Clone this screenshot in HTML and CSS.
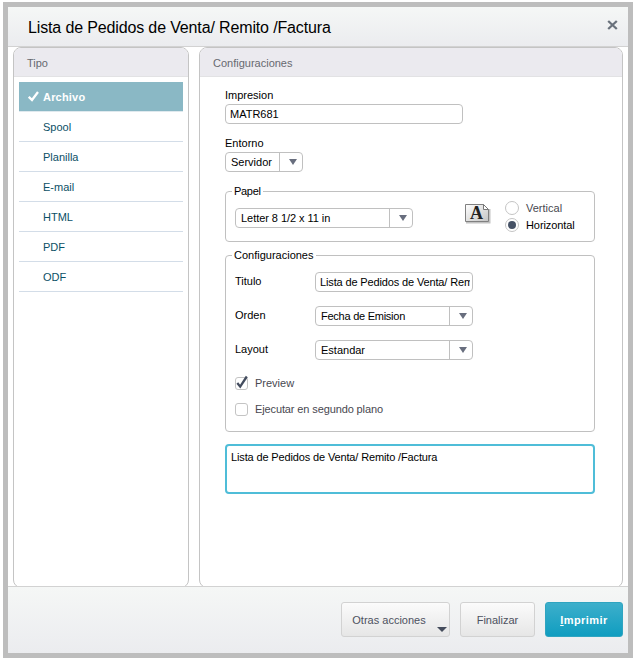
FILE: index.html
```html
<!DOCTYPE html>
<html lang="es">
<head>
    <meta charset="UTF-8">
    <meta name="viewport" content="width=device-width, initial-scale=1.0">
    <title>Lista de Pedidos de Venta/ Remito /Factura</title>
    <link rel="stylesheet" href="styles.css">
</head>
<body>
    <div class="dialog">
        <div class="titlebar">
            <h1>Lista de Pedidos de Venta/ Remito /Factura</h1>
            <svg class="close" width="11" height="10" viewBox="0 0 11 10"><path d="M1.2 1L9.8 9M9.8 1L1.2 9" stroke="#6a727c" stroke-width="2.3" fill="none"/></svg>
        </div>

        <div class="content">
            <div class="panel panel-tipo">
                <div class="panel-head">Tipo</div>
                <ul class="tipos">
                    <li class="active"><svg class="tick" width="11" height="11" viewBox="0 0 11 11"><path d="M.8 5.8L4 9L10 1" stroke="#fff" stroke-width="2.3" fill="none"/></svg><span class="name">Archivo</span></li>
                    <li>Spool</li>
                    <li>Planilla</li>
                    <li>E-mail</li>
                    <li>HTML</li>
                    <li>PDF</li>
                    <li>ODF</li>
                </ul>
            </div>

            <div class="panel panel-config">
                <div class="panel-head">Configuraciones</div>
                <div class="form">
                    <div class="label">Impresion</div>
                    <div class="input impresion">MATR681</div>
                    <div class="label entorno-label">Entorno</div>
                    <div class="select entorno"><span class="value">Servidor</span><span class="arrow"></span></div>

                    <div class="group papel">
                        <div class="legend">Papel</div>
                        <div class="select"><span class="value">Letter 8 1/2 x 11 in</span><span class="arrow"></span></div>
                        <svg class="page-icon" width="28" height="22" viewBox="0 0 28 22">
                            <defs>
                                <linearGradient id="page" x1="0" y1="0" x2="1" y2="1">
                                    <stop offset="0" stop-color="#fff"/>
                                    <stop offset="1" stop-color="#c4c4c4"/>
                                </linearGradient>
                            </defs>
                            <path d="M2 19.5H25.5V6" stroke="#999" stroke-opacity=".6" stroke-width="2" fill="none"/>
                            <path d="M1.5 1.5H19.5L24.5 6.5V18.5H1.5Z" fill="url(#page)" stroke="#808080"/>
                            <path d="M19.5 1.5V6.5H24.5Z" fill="#fff" stroke="#777"/>
                            <text x="12.5" y="15.5" text-anchor="middle" class="page-letter">A</text>
                        </svg>
                        <div class="radios">
                            <div class="option"><span class="radio"></span>Vertical</div>
                            <div class="option selected"><span class="radio"></span>Horizontal</div>
                        </div>
                    </div>

                    <div class="group config">
                        <div class="legend">Configuraciones</div>
                        <div class="row"><span class="label">Titulo</span><div class="input"><div class="clip long">Lista de Pedidos de Venta/ Remito /Factura</div></div></div>
                        <div class="row"><span class="label">Orden</span><div class="select"><span class="value orden">Fecha de Emision</span><span class="arrow"></span></div></div>
                        <div class="row"><span class="label">Layout</span><div class="select"><span class="value">Estandar</span><span class="arrow"></span></div></div>
                        <div class="check">
                            <span class="box"><svg width="13" height="15" viewBox="0 0 13 15"><path d="M2.3 8L5.2 11.6L11.8 1.5" stroke="#434c5e" stroke-width="2.3" fill="none"/></svg></span>Preview
                        </div>
                        <div class="check segundo"><span class="box"></span>Ejecutar en segundo plano</div>
                    </div>

                    <div class="textarea long">Lista de Pedidos de Venta/ Remito /Factura</div>
                </div>
            </div>
        </div>

        <div class="footer">
            <div class="btn otras">Otras acciones<span class="menu-arrow"></span></div>
            <div class="btn finalizar">Finalizar</div>
            <div class="btn primary"><span><u>I</u>mprimir</span></div>
        </div>
    </div>
</body>
</html>
```
FILE: styles.css
```css
* {
    box-sizing: border-box;
}
body {
    margin: 0;
    padding: 2px 2px 2px 3px;
    background: #fff;
    font-family: "Liberation Sans", Arial, sans-serif;
    font-size: 11px;
    line-height: 14px;
    color: #000;
}
.dialog {
    width: 630px;
    height: 656px;
    border: 5px solid #bdbdbd;
    background: #fff;
    display: flex;
    flex-direction: column;
}
.titlebar {
    height: 40px;
    padding: 0 10px 0 20px;
    display: flex;
    align-items: center;
    justify-content: space-between;
    background: linear-gradient(#f5f7f6, #ebecef);
    border-bottom: 1px solid #d2d2d2;
}
.titlebar h1 {
    margin: 2px 0 0;
    font-size: 16px;
    font-weight: normal;
    line-height: 20px;
    letter-spacing: -0.14px;
    white-space: nowrap;
}
.close {
    margin-bottom: 4px;
}
.content {
    height: 539px;
    padding: 0 5px;
    display: flex;
    align-items: flex-start;
    gap: 10px;
    overflow: hidden;
}
.panel {
    height: 541px;
    border: 1px solid #c4c4c4;
    border-radius: 8px;
    overflow: hidden;
}
.panel-tipo {
    width: 176px;
}
.panel-config {
    width: 424px;
}
.panel-head {
    height: 29px;
    padding: 8px 13px 0;
    background: #ebeaef;
    border-bottom: 1px solid #e2e2e4;
    color: #676970;
}
.tipos {
    list-style: none;
    margin: 0;
    padding: 5px 5px 0;
}
.tipos li {
    height: 30px;
    padding: 1px 0 0 24px;
    line-height: 28px;
    border-bottom: 1px solid #d3dde8;
    color: #0b5066;
}
.tipos .active {
    display: flex;
    align-items: center;
    gap: 4px;
    padding: 0 0 0 9px;
    background: #8ab8c5;
    border-bottom-color: #dfe9ee;
    color: #fff;
    font-weight: bold;
}
.tick {
    margin-bottom: 1px;
}
.active .name {
    letter-spacing: 0.2px;
}
.form {
    padding: 11px 27px 0 25px;
}
.input {
    height: 20px;
    padding: 0 4px;
    border: 1px solid #c0c0c0;
    border-radius: 4px;
    line-height: 19px;
    white-space: nowrap;
    overflow: hidden;
}
.clip {
    margin-right: -2px;
    overflow: hidden;
}
.long {
    letter-spacing: -0.14px;
}
.impresion {
    width: 238px;
    margin-top: 2px;
}
.entorno-label {
    margin-top: 12px;
}
.select {
    height: 20px;
    display: flex;
    border: 1px solid #c0c0c0;
    border-radius: 4px;
}
.select .value {
    flex: 1;
    padding-left: 5px;
    line-height: 19px;
    white-space: nowrap;
}
.select .arrow {
    width: 23px;
    border-left: 1px solid #c0c0c0;
    display: flex;
    align-items: center;
    justify-content: center;
}
.arrow::before {
    content: "";
    margin-left: 4px;
    border: 4.5px solid transparent;
    border-top: 6px solid #686e7e;
    border-bottom: 0;
}
.entorno {
    width: 78px;
    margin-top: 2px;
}
.group {
    position: relative;
    width: 370px;
    border: 1px solid #c0c0c0;
    border-radius: 4px;
}
.legend {
    position: absolute;
    top: -8px;
    left: 6px;
    padding: 0 2px;
    background: #fff;
}
.papel .legend {
    letter-spacing: -0.3px;
}
.papel {
    height: 51px;
    margin-top: 19px;
    padding: 0 9px;
    display: flex;
    align-items: flex-start;
}
.papel .select {
    width: 178px;
    margin-top: 16px;
}
.papel .value {
    letter-spacing: -0.05px;
}
.page-icon {
    margin: 11px 0 0 51px;
}
.page-letter {
    font-family: "Liberation Serif", "Times New Roman", serif;
    font-size: 18px;
    font-weight: bold;
    fill: #222;
}
.radios {
    margin: 7px 0 0 13px;
}
.option {
    height: 17px;
    display: flex;
    align-items: center;
    gap: 7px;
    color: #484850;
}
.option.selected {
    color: #000;
    letter-spacing: -0.08px;
}
.radio {
    width: 14px;
    height: 14px;
    border: 1px solid #c4c4c4;
    border-radius: 50%;
    display: flex;
    align-items: center;
    justify-content: center;
}
.selected .radio::before {
    content: "";
    width: 8px;
    height: 8px;
    border-radius: 50%;
    background: #465266;
}
.config {
    height: 177px;
    margin-top: 13px;
    padding: 16px 9px 0;
}
.row {
    height: 20px;
    margin-bottom: 14px;
    display: flex;
}
.row .label {
    width: 80px;
    line-height: 19px;
}
.row .input,
.row .select {
    width: 158px;
}
.orden {
    letter-spacing: -0.25px;
}
.check {
    height: 14px;
    margin: 0 0 12px;
    display: flex;
    align-items: center;
    gap: 7px;
    color: #484850;
}
.row + .check {
    margin-top: 16px;
}
.segundo {
    letter-spacing: -0.12px;
}
.box {
    width: 13px;
    height: 13px;
    border: 1px solid #c4c4c4;
    border-radius: 3px;
}
.box svg {
    display: block;
    margin: -3px -1px -1px;
}
.textarea {
    width: 370px;
    height: 50px;
    margin-top: 12px;
    padding: 4px;
    border: 2px solid #4fbdd8;
    border-radius: 4px;
}
.footer {
    height: 67px;
    padding: 15px 5px 0;
    display: flex;
    justify-content: flex-end;
    gap: 10px;
    background: linear-gradient(#f5f7f6, #ebecef);
    border-top: 1px solid #d2d2d2;
}
.btn {
    position: relative;
    height: 35px;
    display: flex;
    align-items: center;
    justify-content: center;
    border: 1px solid #d2d2d2;
    border-radius: 3px;
    background: linear-gradient(#fbfbfb, #e6e6e6);
    color: #4d5160;
}
.otras {
    width: 109px;
    padding-right: 13px;
}
.menu-arrow {
    position: absolute;
    right: 2px;
    bottom: 4px;
    border: 5px solid transparent;
    border-top: 5px solid #454c5c;
    border-bottom: 0;
}
.finalizar {
    width: 75px;
}
.primary {
    width: 78px;
    border-color: #2fa4c0;
    background: linear-gradient(#3dafcb, #109dc0);
    color: #fff;
    font-weight: bold;
    letter-spacing: 0.45px;
}
```
